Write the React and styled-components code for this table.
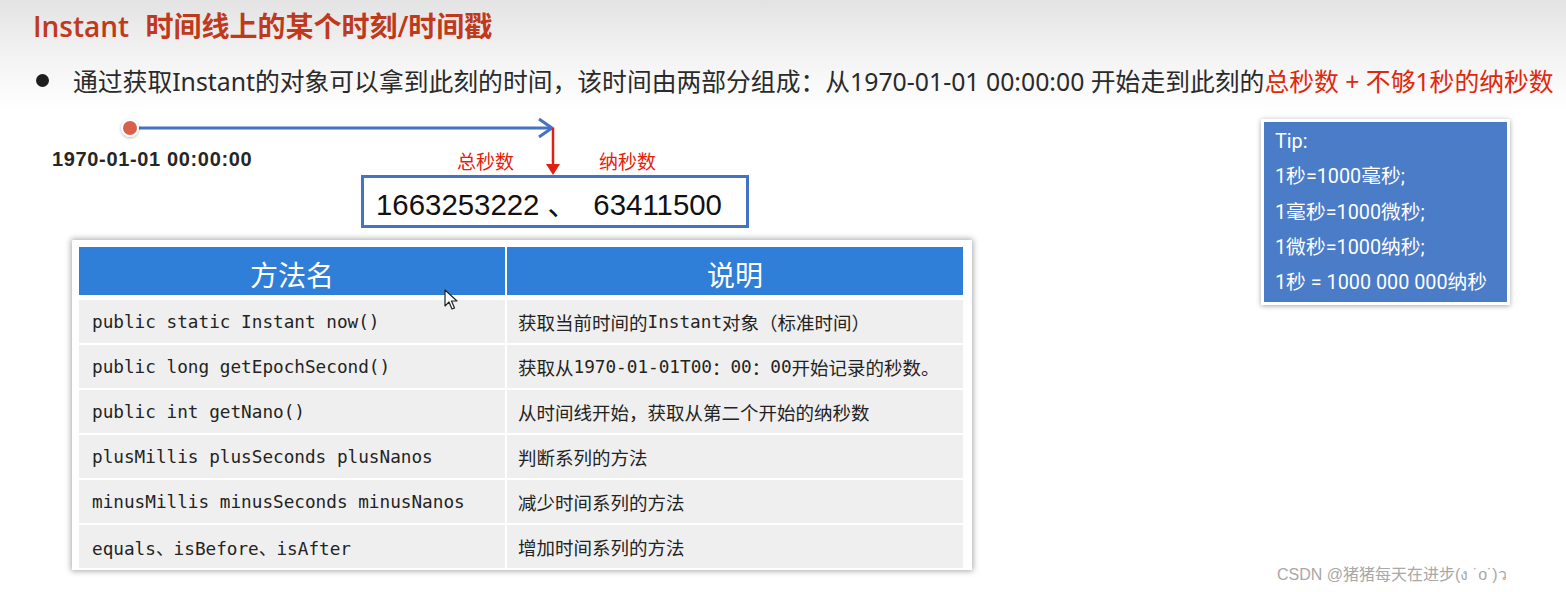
import styled, { createGlobalStyle } from 'styled-components';

const GlobalStyle = createGlobalStyle`
  html, body {
    margin: 0;
    padding: 0;
    background: #ffffff;
  }
`;

const CJK = `"Noto Sans CJK SC", sans-serif`;
const MONO = `"DejaVu Sans Mono", "Noto Sans CJK SC", monospace`;

// 전체 슬라이드
const Page = styled.div`
  position: relative;
  width: 1566px;
  height: 592px;
  overflow: hidden;
  background: linear-gradient(180deg, #e3e3e3 0px, #f4f4f4 60px, #ffffff 112px);
  font-family: "Noto Sans", ${CJK};
`;

// 제목 영역
const Header = styled.div`
  padding: 8px 0 0 33px;
`;

const Title = styled.h1`
  margin: 0;
  font-family: "Open Sans", ${CJK};
  font-size: 28px;
  font-weight: 600;
  line-height: 36px;
  color: #c0391b;
  word-spacing: 9px;
`;

const BulletLine = styled.div`
  display: flex;
  align-items: center;
  margin: 18px 0 0 3px;
  height: 36px;
  font-size: 24.8px;
  color: #2a2a2a;
  white-space: nowrap;
`;

const Bullet = styled.span`
  width: 13px;
  height: 13px;
  border-radius: 50%;
  background: #1e1e1e;
  margin-right: 24px;
  flex-shrink: 0;
`;

const Red = styled.span`
  color: #e0280c;
`;

// 본문 영역
const Body = styled.div`
  display: flex;
  justify-content: space-between;
  margin-top: 12px;
`;

const LeftColumn = styled.div`
  display: flex;
  flex-direction: column;
`;

// 시간선 다이어그램
const Diagram = styled.div`
  position: relative;
  width: 760px;
  height: 130px;
`;

const DiagramSvg = styled.svg`
  position: absolute;
  left: 0;
  top: 0;
`;

const StartLabel = styled.div`
  position: absolute;
  left: 52px;
  top: 38px;
  font-family: "Liberation Sans", ${CJK};
  font-size: 20px;
  font-weight: 700;
  color: #262626;
  letter-spacing: 0.65px;
`;

const PartLabel = styled.div`
  position: absolute;
  left: ${props => props.$x}px;
  top: 37px;
  font-family: ${CJK};
  font-size: 19px;
  color: #e5210c;
`;

const ValueBox = styled.div`
  position: absolute;
  left: 361px;
  top: 65px;
  box-sizing: border-box;
  width: 388px;
  height: 53px;
  border: 3px solid #4472c4;
  background: #ffffff;
  display: flex;
  align-items: center;
  padding-left: 12px;
  font-family: "Liberation Sans", ${CJK};
  font-size: 29.4px;
  color: #111;
  white-space: pre;
`;

// 메서드 표
const TableFrame = styled.div`
  margin-left: 72px;
  width: 884px;
  padding: 7px 9px 2px 7px;
  background: #ffffff;
  box-shadow: 0 0 6px 1px rgba(0, 0, 0, 0.35);
`;

const Table = styled.div`
  display: grid;
  grid-template-columns: 426px 456px;
  grid-template-rows: 51px repeat(6, 43px);
  gap: 2px;
  background: #ffffff;
`;

const HeadCell = styled.div`
  align-self: start;
  height: 48px;
  background: #2f7fd8;
  display: flex;
  align-items: center;
  justify-content: center;
  padding-top: 5px;
  box-sizing: border-box;
  font-family: ${CJK};
  font-size: 28px;
  color: #ffffff;
`;

const Cell = styled.div`
  background: #efefef;
  display: flex;
  align-items: center;
  padding-left: ${props => (props.$desc ? 11 : 13)}px;
  font-family: ${MONO};
  font-size: 17.7px;
  color: #232323;
  white-space: nowrap;
`;

const Cjk = styled.span`
  font-family: ${CJK};
  font-size: 18.5px;
`;

// 팁 상자
const TipBox = styled.div`
  margin: 9px 56px 0 0;
  box-sizing: border-box;
  width: 249px;
  height: 186px;
  padding: 2px 11px;
  border: 3px solid #ffffff;
  background: #4a7cc8;
  box-shadow: 0 1px 5px rgba(0, 0, 0, 0.35);
  font-family: Roboto, ${CJK};
  font-size: 19.8px;
  line-height: 35.3px;
  color: #ffffff;
  white-space: nowrap;
`;

const Watermark = styled.div`
  position: absolute;
  left: 1277px;
  top: 561px;
  font-family: "Liberation Sans", ${CJK};
  font-size: 16px;
  color: #a8a8a8;
`;

const Cursor = styled.svg`
  position: absolute;
  left: 444px;
  top: 289px;
`;

const rows = [
  ['public static Instant now()', <><Cjk>获取当前时间的</Cjk>Instant<Cjk>对象（标准时间）</Cjk></>],
  ['public long getEpochSecond()', <><Cjk>获取从</Cjk>1970-01-01T00<Cjk>：</Cjk>00<Cjk>：</Cjk>00<Cjk>开始记录的秒数。</Cjk></>],
  ['public int getNano()', <Cjk>从时间线开始，获取从第二个开始的纳秒数</Cjk>],
  ['plusMillis plusSeconds plusNanos', <Cjk>判断系列的方法</Cjk>],
  ['minusMillis minusSeconds minusNanos', <Cjk>减少时间系列的方法</Cjk>],
  ['equals、isBefore、isAfter', <Cjk>增加时间系列的方法</Cjk>],
];

const tips = ['Tip:', '1秒=1000毫秒;', '1毫秒=1000微秒;', '1微秒=1000纳秒;', '1秒 = 1000 000 000纳秒'];

const Timeline = () => (
  <Diagram>
    <DiagramSvg width="760" height="130">
      <defs>
        <filter id="dotShadow" x="-50%" y="-50%" width="200%" height="200%">
          <feDropShadow dx="0" dy="1" stdDeviation="1.5" floodColor="#000" floodOpacity="0.3" />
        </filter>
      </defs>
      <line x1="136" y1="18" x2="552" y2="18" stroke="#4472c4" strokeWidth="3" />
      <polyline points="539,9 552,18 539,27" fill="none" stroke="#4472c4" strokeWidth="3" />
      <circle cx="130" cy="18" r="9" fill="#ffffff" filter="url(#dotShadow)" />
      <circle cx="130" cy="18" r="7" fill="#d9604a" />
      <line x1="553" y1="18" x2="553" y2="56" stroke="#e02010" strokeWidth="2.5" />
      <polygon points="546,54 560,54 553,65" fill="#e02010" />
    </DiagramSvg>
    <StartLabel>1970-01-01 00:00:00</StartLabel>
    <PartLabel $x={457}>总秒数</PartLabel>
    <PartLabel $x={599}>纳秒数</PartLabel>
    <ValueBox>{'1663253222 、  63411500'}</ValueBox>
  </Diagram>
);

export default function App() {
  return (
    <Page>
      <GlobalStyle />
      <Header>
        <Title>Instant 时间线上的某个时刻/时间戳</Title>
        <BulletLine>
          <Bullet />
          通过获取Instant的对象可以拿到此刻的时间，该时间由两部分组成：从1970-01-01 00:00:00 开始走到此刻的
          <Red>总秒数 + 不够1秒的纳秒数</Red>
        </BulletLine>
      </Header>
      <Body>
        <LeftColumn>
          <Timeline />
          <TableFrame>
            <Table>
              <HeadCell>方法名</HeadCell>
              <HeadCell>说明</HeadCell>
              {rows.map(([name, desc]) => [
                <Cell key={name}>{name}</Cell>,
                <Cell key={name + '-d'} $desc>{desc}</Cell>,
              ])}
            </Table>
          </TableFrame>
        </LeftColumn>
        <TipBox>
          {tips.map(t => (
            <div key={t}>{t}</div>
          ))}
        </TipBox>
      </Body>
      <Watermark>CSDN @猪猪每天在进步(ง ˙o˙)ว</Watermark>
      <Cursor width="14" height="22" viewBox="0 0 14 22">
        <path d="M1 1 L1 17 L5 13 L8 20 L10.5 19 L7.5 12 L13 12 Z" fill="#ffffff" stroke="#222" strokeWidth="1.2" strokeLinejoin="round" />
      </Cursor>
    </Page>
  );
}
